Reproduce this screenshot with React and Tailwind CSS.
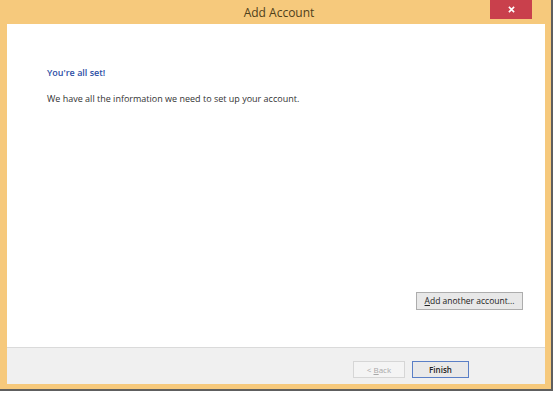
import React from 'react';

const App = () => {
  return (
    <div className="w-[557px] h-[396px] bg-white" style={{ fontFamily: '"Open Sans", "DejaVu Sans", sans-serif' }}>
      {/* Window */}
      <div className="w-[553px] h-[391px] border-r-2 border-b-2 border-[#5e5e5e]">
        <div className="w-full h-full bg-[#f6c97c] flex flex-col pl-[7px] pr-[6px] pb-[5px]">
          {/* Title bar */}
          <div className="relative h-[24px] flex items-center justify-center">
            <span className="text-[12px] text-[#4f401a] leading-none pt-[1px] pl-[6px]">Add Account</span>
            <button className="absolute right-[13px] top-0 w-[42px] h-[19px] bg-[#c9404c] flex items-center justify-center">
              <svg width="7" height="7" viewBox="0 0 8 8">
                <path d="M1 1 L7 7 M7 1 L1 7" stroke="#ffffff" strokeWidth="1.8" />
              </svg>
            </button>
          </div>

          {/* Content */}
          <div className="flex-1 bg-white flex flex-col">
            <div className="flex-1 flex flex-col pl-[40px] pt-[44px]">
              <p className="text-[9px] font-semibold text-[#2d4fa6] leading-none">You're all set!</p>
              <p className="text-[9px] text-[#333333] leading-none mt-[17px]">
                We have all the information we need to set up your account.
              </p>
              <div className="flex-1" />
              <div className="flex justify-end pr-[22px] mb-[37px]">
                <button className="w-[107px] h-[18px] bg-[#e8e8e8] border border-[#adadad] text-[8.5px] text-[#222222] leading-none">
                  <span className="underline">A</span>dd another account...
                </button>
              </div>
            </div>

            {/* Footer */}
            <div className="h-[37px] bg-[#f0f0f0] border-t border-[#dadada] flex items-start justify-end gap-[7px] pt-[13px] pr-[76px]">
              <button className="w-[52px] h-[17px] bg-[#f4f4f4] border border-[#d6d6d6] text-[8px] text-[#a8a8a8] leading-none">
                &lt; <span className="underline">B</span>ack
              </button>
              <button className="w-[57px] h-[17px] bg-[#e9e9e9] border border-[#5a7fc6] text-[8px] font-semibold text-[#222222] leading-none">
                Finish
              </button>
            </div>
          </div>
        </div>
      </div>
    </div>
  );
};

export default App;
